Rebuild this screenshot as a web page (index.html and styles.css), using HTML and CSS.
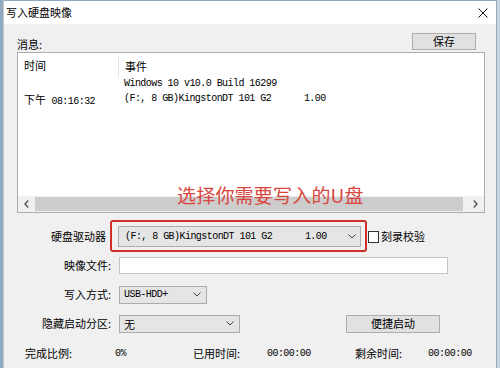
FILE: index.html
```html
<!DOCTYPE html>
<html lang="zh-CN">
<head>
<meta charset="utf-8">
<title>写入硬盘映像</title>
<link rel="stylesheet" href="styles.css">
</head>
<body>
<div class="window">
  <div class="titlebar">
    <span class="title">写入硬盘映像</span>
    <svg class="close" width="10" height="10" viewBox="0 0 10 10"><path d="M0.5 0.5 L9.5 9.5 M9.5 0.5 L0.5 9.5" stroke="#111" stroke-width="1" fill="none"/></svg>
  </div>
  <div class="content">
    <div class="msg-row">
      <span class="label">消息:</span>
      <button class="btn save">保存</button>
    </div>
    <div class="list">
      <div class="list-head">
        <div class="col1">时间</div>
        <div class="col2 head-sep">事件</div>
      </div>
      <div class="list-body">
        <div class="row"><div class="col1"></div><div class="col2 mono">Windows 10 v10.0 Build 16299</div></div>
        <div class="row"><div class="col1"><span>下午</span><span class="mono"> 08:16:32</span></div><div class="col2 mono">(F:, 8 GB)KingstonDT 101 G2      1.00</div></div>
      </div>
      <div class="hscroll">
        <div class="sb-btn"><svg width="5" height="8" viewBox="0 0 5 8"><polyline points="4.2,0.6 1,4 4.2,7.4" fill="none" stroke="#555" stroke-width="1.4"/></svg></div>
        <div class="sb-thumb"></div>
        <div class="sb-btn"><svg width="5" height="8" viewBox="0 0 5 8"><polyline points="0.8,0.6 4,4 0.8,7.4" fill="none" stroke="#555" stroke-width="1.4"/></svg></div>
      </div>
    </div>
    <div class="form">
      <div class="flabel flabel-drive">硬盘驱动器</div>
      <div class="fctrl">
        <div class="select drive"><span class="mono">(F:, 8 GB)KingstonDT 101 G2      1.00</span><svg class="chev" width="8" height="5" viewBox="0 0 8 5"><polyline points="0.5,0.5 4,4 7.5,0.5" fill="none" stroke="#444" stroke-width="1"/></svg></div>
        <span class="checkbox"></span><span class="cblabel">刻录校验</span>
      </div>
      <div class="flabel">映像文件:</div>
      <div class="fctrl"><div class="textbox"></div></div>
      <div class="flabel">写入方式:</div>
      <div class="fctrl">
        <div class="select mode"><span class="mono">USB-HDD+</span><svg class="chev" width="8" height="5" viewBox="0 0 8 5"><polyline points="0.5,0.5 4,4 7.5,0.5" fill="none" stroke="#444" stroke-width="1"/></svg></div>
      </div>
      <div class="flabel">隐藏启动分区:</div>
      <div class="fctrl">
        <div class="select hide"><span>无</span><svg class="chev" width="8" height="5" viewBox="0 0 8 5"><polyline points="0.5,0.5 4,4 7.5,0.5" fill="none" stroke="#444" stroke-width="1"/></svg></div>
        <button class="btn quick">便捷启动</button>
      </div>
    </div>
    <div class="stats">
      <span class="s1">完成比例:</span>
      <span class="s2 mono">0%</span>
      <span class="s3">已用时间:</span>
      <span class="s4 mono">00:00:00</span>
      <span class="s5">剩余时间:</span>
      <span class="s6 mono">00:00:00</span>
    </div>
  </div>
  <div class="annot-text">选择你需要写入的U盘</div>
  <div class="annot-box"></div>
</div>
</body>
</html>
```

FILE: styles.css
```css
* { box-sizing: border-box; }
html, body { margin: 0; padding: 0; }
body {
  width: 500px;
  height: 368px;
  overflow: hidden;
  background: linear-gradient(90deg, #8fa9c0 0, #8fa9c0 3px, #c6d5e1 3px);
  font-family: "Noto Sans CJK SC", "Noto Sans", sans-serif;
  font-size: 11px;
  color: #000;
}
.window {
  position: relative;
  margin-left: 3px;
  width: 494px;
  height: 368px;
  background: #f0f0f0;
  border-left: 1px solid #c9c9c9;
  border-right: 1px solid #9aa6b2;
}
.titlebar {
  height: 24px;
  background: #fff;
  border-top: 1px solid #8eaac4;
  display: flex;
  align-items: center;
  padding-left: 2px;
  padding-right: 8px;
}
.title { font-size: 11px; flex: 1; line-height: 1; }
.close { display: block; margin-right: 0px; }
.content { padding: 9px 0 0 13px; }
.msg-row {
  width: 468px;
  height: 17px;
  display: flex;
  align-items: flex-end;
  justify-content: space-between;
}
.label { line-height: 11px; }
.btn {
  font-family: inherit;
  font-size: 11px;
  background: #e1e1e1;
  border: 1px solid #adadad;
  padding: 0;
  color: #000;
  line-height: 1;
  display: flex;
  align-items: center;
  justify-content: center;
}
.save { width: 64px; height: 17px; margin-right: 9px; }
.list {
  margin-top: 2px;
  width: 468px;
  height: 161px;
  background: #fff;
  border: 1px solid #abadb3;
  display: flex;
  flex-direction: column;
}
.list-head { height: 23px; display: flex; align-items: center; }
.col1 { width: 100px; padding-left: 6px; white-space: pre; }
.col2 { padding-left: 6px; white-space: pre; }
.head-sep {
  border-left: 1px solid #e5e5e5;
  height: 22px;
  margin-top: 2px;
  display: flex;
  align-items: center;
}
.list-body { flex: 1; }
.row { height: 15px; display: flex; align-items: center; }
.mono {
  font-family: "Liberation Mono", monospace;
  font-size: 10px;
  letter-spacing: -0.55px;
  white-space: pre;
}
.hscroll {
  height: 16px;
  background: #f0f0f0;
  display: flex;
  align-items: stretch;
  padding: 1px 0;
}
.sb-btn { width: 17px; display: flex; align-items: center; justify-content: center; }
.sb-thumb { flex: 1; background: #cdcdcd; margin-right: 4px; }
.form {
  margin-top: 9px;
  display: grid;
  grid-template-columns: 95px 1fr;
  grid-auto-rows: 29px;
  align-items: center;
}
.flabel { text-align: right; padding-right: 1px; line-height: 1; }
.flabel-drive { padding-right: 6px; }
.fctrl { display: flex; align-items: center; padding-left: 7px; }
.select {
  display: flex;
  align-items: center;
  justify-content: space-between;
  background: #e5e5e5;
  border: 1px solid #acacac;
  padding: 0 5px 0 4px;
}
.chev { display: block; flex: none; }
.drive { width: 243px; height: 21px; margin-left: -1px; padding-left: 6px; padding-right: 4px; }
.checkbox {
  width: 11px;
  height: 12px;
  background: #fff;
  border: 1px solid #333;
  margin-left: 7px;
}
.cblabel { margin-left: 2px; line-height: 1; }
.textbox { width: 329px; height: 17px; background: #fff; border: 1px solid #c4c4c4; }
.mode { width: 88px; height: 18px; }
.hide { width: 121px; height: 18px; }
.quick { width: 94px; height: 18px; margin-left: 106px; }
.stats {
  margin-top: 1px;
  height: 29px;
  display: flex;
  align-items: center;
  padding-left: 8px;
  line-height: 1;
}
.s1 { width: 90px; }
.s2 { width: 78px; }
.s3 { width: 74px; }
.s4 { width: 88px; }
.s5 { width: 73px; }
.annot-text {
  position: absolute;
  left: 173px;
  top: 185px;
  font-size: 19px;
  line-height: 19px;
  color: #d8463d;
  letter-spacing: 0.2px;
  white-space: nowrap;
}
.annot-box {
  position: absolute;
  left: 106px;
  top: 220px;
  width: 257px;
  height: 32px;
  border: 2px solid #cf2f27;
  border-radius: 3px;
}
```
